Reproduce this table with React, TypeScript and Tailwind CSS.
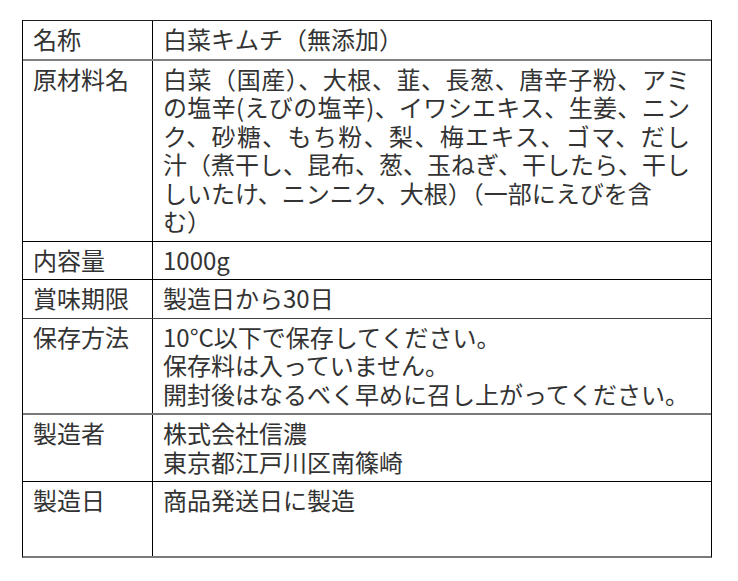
import React from 'react';

type Row = {
  label: string;
  lines: string[];
  justify?: number; // number of leading lines that are justified
  border: string;
  extra?: string;
};

const rows: Row[] = [
  { label: '名称', lines: ['白菜キムチ（無添加）'], border: 'border-b-2 border-b-[#808080]' },
  {
    label: '原材料名',
    lines: [
      '白菜（国産）、大根、韮、長葱、唐辛子粉、アミ',
      'の塩辛(えびの塩辛)、イワシエキス、生姜、ニン',
      'ク、砂糖、もち粉、梨、梅エキス、ゴマ、だし',
      '汁（煮干し、昆布、葱、玉ねぎ、干したら、干し',
      'しいたけ、ニンニク、大根）（一部にえびを含',
      'む）',
    ],
    justify: 4,
    border: 'border-b border-b-black',
  },
  { label: '内容量', lines: ['1000g'], border: 'border-b border-b-black' },
  { label: '賞味期限', lines: ['製造日から30日'], border: 'border-b border-b-[#404040]' },
  {
    label: '保存方法',
    lines: ['10°C以下で保存してください。', '保存料は入っていません。', '開封後はなるべく早めに召し上がってください。'],
    border: 'border-b-2 border-b-[#7a7a7a]',
  },
  { label: '製造者', lines: ['株式会社信濃', '東京都江戸川区南篠崎'], border: 'border-b border-b-black' },
  { label: '製造日', lines: ['商品発送日に製造'], border: '', extra: 'min-h-[74px]' },
];

export default function App() {
  return (
    <div
      lang="ja"
      className="w-[738px] h-[581px] bg-white pt-[20px] pl-[22px] text-[24px] leading-[28.5px] text-[#333]"
      style={{ fontFamily: '"Noto Sans CJK JP", "Noto Sans", sans-serif' }}
    >
      <div className="w-[690px] border-t border-t-[#222] border-x border-x-black border-b-2 border-b-[#7a7a7a]">
        {rows.map((row) => (
          <div key={row.label} className={`flex ${row.border} ${row.extra ?? ''}`}>
            <div className="w-[130px] shrink-0 border-r border-r-black pl-[10px] pt-[4px] pb-[5px] whitespace-nowrap">
              {row.label}
            </div>
            <div className="flex-1 pl-[10px] pr-[21px] pt-[4px] pb-[5px]">
              {row.lines.map((line, i) => (
                <div
                  key={i}
                  className={
                    i < (row.justify ?? 0)
                      ? 'whitespace-nowrap text-justify [text-align-last:justify]'
                      : 'whitespace-nowrap'
                  }
                >
                  {line}
                </div>
              ))}
            </div>
          </div>
        ))}
      </div>
    </div>
  );
}
